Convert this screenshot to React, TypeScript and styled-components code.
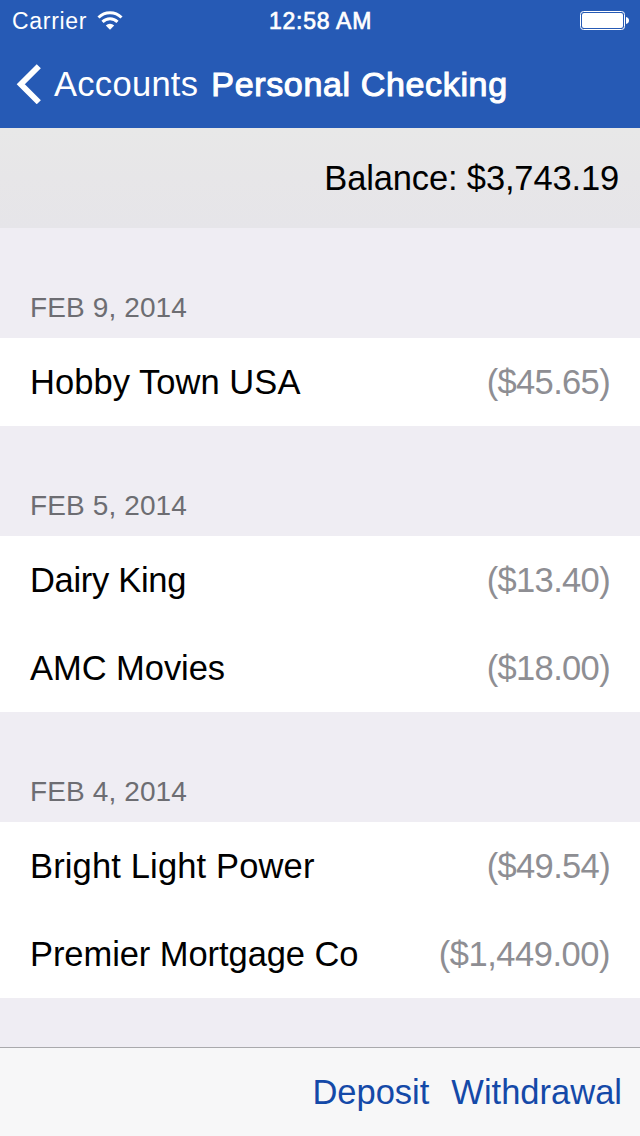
import React from "react";
import styled, { createGlobalStyle } from "styled-components";

const GlobalStyle = createGlobalStyle`
  * { box-sizing: border-box; }
  body { margin: 0; background: #efedf3; }
`;

const Screen = styled.div`
  width: 640px;
  height: 1136px;
  display: flex;
  flex-direction: column;
  overflow: hidden;
  background: #efedf3;
  color: #000;
  font-family: "Liberation Sans", Arial, sans-serif;
  font-size: 34.5px;
  line-height: 40px;
  white-space: nowrap;
`;

const Label = styled.span<{ $tracking?: number }>`
  letter-spacing: ${(p) => p.$tracking ?? 0}px;
`;

const Header = styled.header`
  height: 128px;
  flex: none;
  background: #265ab5;
  color: #fff;
`;

const StatusBar = styled.div`
  height: 40px;
  padding: 1px 11px 0 12px;
  display: grid;
  grid-template-columns: 1fr auto 1fr;
  align-items: center;
  font-size: 23px;
`;

const Carrier = styled.div`
  display: flex;
  align-items: center;
  gap: 10px;
`;

const Clock = styled.time`
  letter-spacing: 0.75px;
  -webkit-text-stroke: 0.7px #fff;
`;

const BatteryIcon = styled.svg`
  justify-self: end;
`;

const NavBar = styled.nav`
  height: 88px;
  padding: 0 16px;
  display: flex;
  align-items: center;
`;

const BackButton = styled.a`
  display: flex;
  align-items: center;
  gap: 13px;
  color: #fff;
`;

const Title = styled.h1`
  margin: 0 0 0 13px;
  font-size: 34px;
  font-weight: 400;
  letter-spacing: 0.65px;
  -webkit-text-stroke: 1.1px #fff;
`;

const Balance = styled.div`
  height: 100px;
  flex: none;
  padding: 0 21px;
  display: flex;
  align-items: center;
  justify-content: flex-end;
  background: linear-gradient(#e8e8e8, #e7e6e8 50%, #e6e5e9);
`;

const Transactions = styled.main`
  flex: 1;
`;

const DateHeading = styled.h2`
  height: 110px;
  margin: 0;
  padding: 0 30px 10px;
  display: flex;
  align-items: flex-end;
  color: #6d6d72;
  font-size: 28px;
  font-weight: 400;
  letter-spacing: 0.12px;
`;

const Row = styled.div`
  height: 88px;
  padding: 0 30px;
  display: flex;
  align-items: center;
  justify-content: space-between;
  background: #fff;
`;

const Amount = styled(Label)`
  color: #8e8e93;
`;

const Toolbar = styled.footer`
  height: 89px;
  flex: none;
  padding: 0 18px;
  display: flex;
  align-items: center;
  justify-content: flex-end;
  gap: 22px;
  border-top: 1px solid #a9a9ac;
  background: #f7f7f8;
  color: #1449a8;
`;

const groups = [
  {
    date: "FEB 9, 2014",
    rows: [{ name: "Hobby Town USA", amount: "($45.65)", tracking: 0.05 }],
  },
  {
    date: "FEB 5, 2014",
    rows: [
      { name: "Dairy King", amount: "($13.40)", tracking: -0.3 },
      { name: "AMC Movies", amount: "($18.00)", tracking: -0.05 },
    ],
  },
  {
    date: "FEB 4, 2014",
    rows: [
      { name: "Bright Light Power", amount: "($49.54)", tracking: 0.15 },
      { name: "Premier Mortgage Co", amount: "($1,449.00)", tracking: -0.07 },
    ],
  },
];

export default function App() {
  return (
    <Screen>
      <GlobalStyle />
      <Header>
        <StatusBar>
          <Carrier>
            <Label $tracking={0.7}>Carrier</Label>
            <svg width="26" height="20" viewBox="0 0 26 20" fill="none" stroke="#fff" strokeWidth="3">
              <path d="M1.500 6.500a16.300 16.300 0 0 1 23 0" />
              <path d="M5.500 10.900a10.600 10.600 0 0 1 15 0" />
              <path d="M13 18.800 8.800 14.500a6 6 0 0 1 8.400 0Z" fill="#fff" stroke="none" />
            </svg>
          </Carrier>
          <Clock>12:58 AM</Clock>
          <BatteryIcon width="49" height="20" viewBox="0 0 49 20">
            <rect x="0.5" y="0.5" width="44" height="18" rx="3" fill="none" stroke="#fff" />
            <rect x="2" y="2" width="41" height="15" rx="2" fill="#fff" />
            <path d="M46 6c2 .4 3 1.700 3 3.500s-1 3.100-3 3.500z" fill="#fff" />
          </BatteryIcon>
        </StatusBar>
        <NavBar>
          <BackButton>
            <svg width="25" height="40" viewBox="0 0 25 40" fill="none" stroke="#fff" strokeWidth="5.800">
              <path d="M22.800 2.200 4.800 20.200 22.800 38.200" />
            </svg>
            <Label $tracking={0.3}>Accounts</Label>
          </BackButton>
          <Title>Personal Checking</Title>
        </NavBar>
      </Header>
      <Balance>
        <Label $tracking={-0.15}>Balance: $3,743.19</Label>
      </Balance>
      <Transactions>
        {groups.map((g) => (
          <section key={g.date}>
            <DateHeading>{g.date}</DateHeading>
            {g.rows.map((r) => (
              <Row key={r.name}>
                <Label $tracking={r.tracking}>{r.name}</Label>
                <Amount $tracking={r.amount.length > 8 ? -0.48 : -0.65}>{r.amount}</Amount>
              </Row>
            ))}
          </section>
        ))}
      </Transactions>
      <Toolbar>
        <Label>Deposit</Label>
        <Label>Withdrawal</Label>
      </Toolbar>
    </Screen>
  );
}
